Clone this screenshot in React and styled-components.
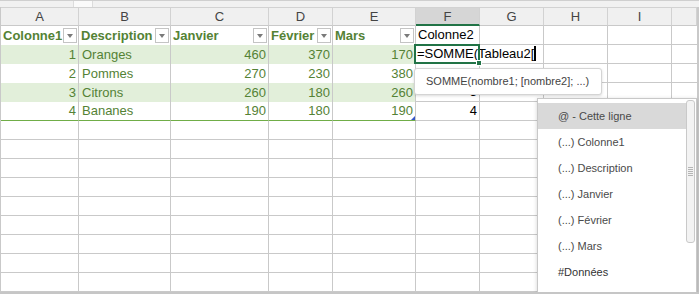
import React from "react";
import styled, { createGlobalStyle, css } from "styled-components";

const GlobalStyle = createGlobalStyle`
  html, body { margin: 0; padding: 0; background: #ffffff; overflow: hidden; }
  * { box-sizing: border-box; }
`;

const GRID = "#c9c9c9";
const GREEN_TEXT = "#548235";
const BAND = "#e2efda";
const TABLE_LINE = "#70ad47";
const EXCEL_GREEN = "#217346";

const Screen = styled.div`
  width: 699px;
  height: 294px;
  display: flex;
  flex-direction: column;
  background: #fff;
  font-family: "Liberation Sans", Arial, sans-serif;
`;

const SheetArea = styled.div`
  position: relative;
  height: 292px;
  overflow: hidden;
  display: flex;
  flex-direction: column;
`;

const TopStrip = styled.div`
  height: 7px;
  flex-shrink: 0;
  background: #f1f1f1;
  border-top: 1px solid #cfcfcf;
  display: flex;
`;

const SplitTab = styled.div`
  margin-left: 73px;
  width: 20px;
  height: 100%;
  background: #fafafa;
  border-left: 1px solid #dcdcdc;
  border-right: 1px solid #dcdcdc;
`;

const Sheet = styled.div`
  display: grid;
  grid-template-columns: 78px 92px 98px 64px 83px 64px 64px 64px 64px 1fr;
  grid-auto-rows: 19px;
  border-left: 1px solid ${GRID};
  border-right: 2px solid ${GRID};
  font-size: 13px;
  line-height: 18px;
`;

const ColHead = styled.div`
  border-top: 1px solid #d2d2d2;
  border-right: 1px solid #d2d2d2;
  border-bottom: ${(p) => (p.$selected ? `2px solid ${EXCEL_GREEN}` : "1px solid #c9c9c9")};
  background: ${(p) => (p.$selected ? "#d6d6d6" : "#f0f0f0")};
  color: #444;
  text-align: center;
  line-height: 17px;
  font-size: 13px;
`;

const Cell = styled.div`
  position: relative;
  display: flex;
  align-items: center;
  justify-content: ${(p) => (p.$right ? "flex-end" : "flex-start")};
  padding: ${(p) => (p.$right ? "0 2px 0 0" : "0 0 0 2px")};
  border-right: 1px solid ${GRID};
  border-bottom: 1px solid ${GRID};
  background: #fff;
  color: #000;
  white-space: nowrap;
  line-height: 18px;
  ${(p) =>
    p.$table &&
    css`
      border-bottom: none;
      color: ${GREEN_TEXT};
    `}
  ${(p) =>
    p.$band &&
    css`
      background: ${BAND};
    `}
  ${(p) =>
    p.$bottom &&
    css`
      border-bottom: 1px solid ${TABLE_LINE};
    `}
  ${(p) =>
    p.$head &&
    css`
      font-weight: bold;
      justify-content: space-between;
      padding-right: 1px;
    `}
  ${(p) =>
    p.$last &&
    css`
      border-right: none;
    `}
`;

const CellText = styled.span`
  padding-left: ${(p) => (p.$indent ? "1px" : "0")};
`;

const FilterButton = styled.span`
  flex-shrink: 0;
  width: 14px;
  height: 15px;
  border: 1px solid #c4c4c4;
  background: #fff;
  display: flex;
  align-items: center;
  justify-content: center;
  &::after {
    content: "";
    width: 0;
    height: 0;
    border-left: 3.5px solid transparent;
    border-right: 3.5px solid transparent;
    border-top: 4px solid #7a7a7a;
  }
`;

const ActiveCell = styled(Cell)`
  z-index: 3;
  overflow: visible;
  padding-left: 1px;
`;

const ActiveFrame = styled.div`
  position: absolute;
  top: -1px;
  left: -2px;
  right: -1px;
  bottom: -1px;
  border: 2px solid ${EXCEL_GREEN};
  pointer-events: none;
`;

const FillHandle = styled.div`
  position: absolute;
  right: -4px;
  bottom: -4px;
  width: 6px;
  height: 6px;
  background: ${EXCEL_GREEN};
  border: 1px solid #fff;
`;

const Caret = styled.span`
  display: inline-block;
  width: 2px;
  height: 15px;
  background: #000;
  vertical-align: -3px;
`;

const ResizeMark = styled.span`
  position: absolute;
  right: 0;
  bottom: 0;
  width: 0;
  height: 0;
  border-left: 4px solid transparent;
  border-bottom: 4px solid #3556c9;
`;

const Tooltip = styled.div`
  position: absolute;
  left: 414px;
  top: 68px;
  width: 188px;
  height: 27px;
  z-index: 5;
  background: #fff;
  border: 1px solid #d4d4d4;
  border-radius: 3px;
  box-shadow: 0 1px 3px rgba(0, 0, 0, 0.15);
  padding-left: 11px;
  font-size: 11px;
  line-height: 25px;
  color: #444;
  white-space: nowrap;
`;

const Dropdown = styled.div`
  position: absolute;
  left: 537px;
  top: 98px;
  width: 160px;
  height: 210px;
  z-index: 6;
  background: #fff;
  border: 1px solid #c8c8c8;
  box-shadow: 0 1px 4px rgba(0, 0, 0, 0.18);
  padding: 4px 10px 0 0;
  display: flex;
  flex-direction: column;
`;

const DropItem = styled.div`
  height: 26px;
  line-height: 26px;
  padding-left: 20px;
  font-size: 11px;
  color: ${(p) => (p.$dark ? "#333" : "#4a4a4a")};
  background: ${(p) => (p.$active ? "#d9d9d9" : "transparent")};
  white-space: nowrap;
`;

const ScrollThumb = styled.div`
  position: absolute;
  top: 1px;
  right: 1px;
  width: 9px;
  height: 143px;
  background: #f3f3f3;
  border: 1px solid #c9c9c9;
  border-radius: 3px;
  display: flex;
  align-items: center;
  justify-content: center;
`;

const Grip = styled.div`
  width: 5px;
  height: 9px;
  background: repeating-linear-gradient(
    to bottom,
    #b5b5b5 0px,
    #b5b5b5 1px,
    transparent 1px,
    transparent 2px
  );
`;

const BottomBar = styled.div`
  height: 2px;
  background: #c6c6c6;
`;

const letters = ["A", "B", "C", "D", "E", "F", "G", "H", "I", ""];
const headers = ["Colonne1", "Description", "Janvier", "Février", "Mars"];
const rows = [
  { a: 1, b: "Oranges", c: 460, d: 370, e: 170, f: null },
  { a: 2, b: "Pommes", c: 270, d: 230, e: 380, f: "" },
  { a: 3, b: "Citrons", c: 260, d: 180, e: 260, f: 3 },
  { a: 4, b: "Bananes", c: 190, d: 180, e: 190, f: 4 },
];
const items = [
  "@ - Cette ligne",
  "(...) Colonne1",
  "(...) Description",
  "(...) Janvier",
  "(...) Février",
  "(...) Mars",
  "#Données",
];

const EMPTY_ROWS = 9;

function EmptyCells({ from, count, keyBase }) {
  const out = [];
  for (let i = 0; i < count; i++) {
    const col = from + i;
    out.push(<Cell key={`${keyBase}-${col}`} $last={col === 9} />);
  }
  return out;
}

export default function App() {
  return (
    <Screen>
      <GlobalStyle />
      <SheetArea>
        <TopStrip>
          <SplitTab />
        </TopStrip>
        <Sheet>
          {letters.map((l, i) => (
            <ColHead key={`h${i}`} $selected={l === "F"}>
              {l}
            </ColHead>
          ))}

          {headers.map((h) => (
            <Cell key={h} $table $head>
              <span>{h}</span>
              <FilterButton />
            </Cell>
          ))}
          <Cell>Colonne2</Cell>
          <EmptyCells from={6} count={4} keyBase="th" />

          {rows.map((r, i) => {
            const band = i % 2 === 0;
            const bottom = i === rows.length - 1;
            return (
              <React.Fragment key={r.b}>
                <Cell $table $band={band} $bottom={bottom} $right>
                  {r.a}
                </Cell>
                <Cell $table $band={band} $bottom={bottom}>
                  <CellText $indent>{r.b}</CellText>
                </Cell>
                <Cell $table $band={band} $bottom={bottom} $right>
                  {r.c}
                </Cell>
                <Cell $table $band={band} $bottom={bottom} $right>
                  {r.d}
                </Cell>
                <Cell $table $band={band} $bottom={bottom} $right>
                  {r.e}
                  {bottom && <ResizeMark />}
                </Cell>
                {r.f === null ? (
                  <ActiveCell>
                    <span>
                      =SOMME(Tableau2[
                      <Caret />
                    </span>
                    <ActiveFrame>
                      <FillHandle />
                    </ActiveFrame>
                  </ActiveCell>
                ) : (
                  <Cell $right>{r.f}</Cell>
                )}
                <EmptyCells from={6} count={4} keyBase={`r${i}`} />
              </React.Fragment>
            );
          })}

          {Array.from({ length: EMPTY_ROWS }).map((_, i) => (
            <EmptyCells key={`e${i}`} from={0} count={10} keyBase={`e${i}`} />
          ))}
        </Sheet>

        <Tooltip>SOMME(nombre1; [nombre2]; ...)</Tooltip>

        <Dropdown>
          {items.map((it, i) => (
            <DropItem key={it} $active={i === 0} $dark={it.startsWith("#")}>
              {it}
            </DropItem>
          ))}
          <ScrollThumb>
            <Grip />
          </ScrollThumb>
        </Dropdown>
      </SheetArea>
      <BottomBar />
    </Screen>
  );
}
